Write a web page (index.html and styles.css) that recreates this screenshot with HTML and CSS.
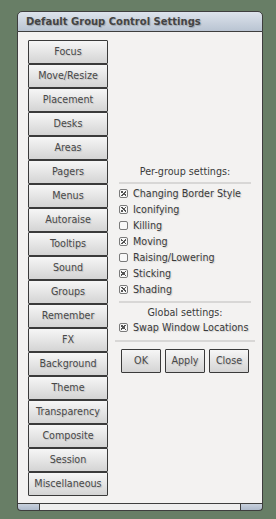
FILE: index.html
```html
<!DOCTYPE html>
<html lang="en">
<head>
    <meta charset="UTF-8">
    <title>Default Group Control Settings</title>
    <link rel="stylesheet" href="styles.css">
</head>
<body>
    <div class="window">
        <div class="titlebar">Default Group Control Settings</div>

        <div class="content">
            <div class="tabs">
                <button class="tab">Focus</button>
                <button class="tab">Move/Resize</button>
                <button class="tab">Placement</button>
                <button class="tab">Desks</button>
                <button class="tab">Areas</button>
                <button class="tab">Pagers</button>
                <button class="tab">Menus</button>
                <button class="tab">Autoraise</button>
                <button class="tab">Tooltips</button>
                <button class="tab">Sound</button>
                <button class="tab">Groups</button>
                <button class="tab">Remember</button>
                <button class="tab">FX</button>
                <button class="tab">Background</button>
                <button class="tab">Theme</button>
                <button class="tab">Transparency</button>
                <button class="tab">Composite</button>
                <button class="tab">Session</button>
                <button class="tab">Miscellaneous</button>
            </div>

            <div class="panel">
                <div class="group">
                    <div class="group-title">Per-group settings:</div>
                    <div class="sep"></div>
                    <label class="check on"><span class="box"></span>Changing Border Style</label>
                    <label class="check on"><span class="box"></span>Iconifying</label>
                    <label class="check"><span class="box"></span>Killing</label>
                    <label class="check on"><span class="box"></span>Moving</label>
                    <label class="check"><span class="box"></span>Raising/Lowering</label>
                    <label class="check on"><span class="box"></span>Sticking</label>
                    <label class="check on"><span class="box"></span>Shading</label>
                    <div class="sep"></div>
                    <div class="group-title">Global settings:</div>
                    <label class="check on"><span class="box"></span>Swap Window Locations</label>
                </div>
                <div class="sep wide"></div>
                <div class="actions">
                    <button class="btn">OK</button>
                    <button class="btn">Apply</button>
                    <button class="btn">Close</button>
                </div>
            </div>
        </div>

        <div class="handles">
            <div class="handle corner"></div>
            <div class="handle middle"></div>
            <div class="handle corner"></div>
        </div>
    </div>
</body>
</html>
```

FILE: styles.css
```css
* {
    margin: 0;
    padding: 0;
    box-sizing: border-box;
}

body {
    background: #687e66;
    font-family: "DejaVu Sans", sans-serif;
    font-size: 9.6px;
    color: #3a3a3a;
    width: 276px;
    height: 519px;
    overflow: hidden;
}

.window {
    margin: 11px 0 0 17px;
    width: 246px;
}

.titlebar {
    height: 21px;
    border: 1px solid #3e3e3e;
    border-radius: 5px 5px 0 0;
    background: linear-gradient(#dde3ec, #b9c4d2);
    font-weight: bold;
    font-size: 10px;
    color: #444;
    text-shadow: 1px 1px 1px rgba(0, 0, 0, 0.2);
    padding: 3px 0 0 8px;
    line-height: 14px;
}

.content {
    display: flex;
    align-items: center;
    background: #f3f2f1;
    border: 1px solid #3e3e3e;
    border-top: none;
    padding: 8px 9px 7px 10px;
}

.tabs {
    display: flex;
    flex-direction: column;
    width: 80px;
}

.tab,
.btn {
    font-family: "DejaVu Sans", sans-serif;
    font-size: 9.6px;
    color: #484848;
    text-shadow: 1px 1px 1px rgba(0, 0, 0, 0.15);
    border: 1px solid #3a3a3a;
    border-radius: 1px;
    background: linear-gradient(#f6f6f6, #d4d4d4);
    padding: 0 0 1px;
}

.tab {
    height: 24px;
}

.panel {
    margin-left: 9px;
    flex: 1;
}

.group {
    padding: 0 2px;
}

.group-title {
    text-align: center;
    height: 15px;
    line-height: 15px;
}

.sep {
    height: 2px;
    background: #d8d7d6;
    margin: 3px 0 2px;
}

.sep.wide {
    margin: 4px -2px 7px;
}

.check {
    display: flex;
    align-items: center;
    height: 16px;
    white-space: nowrap;
    text-shadow: 1px 1px 1px rgba(0, 0, 0, 0.15);
}

.box {
    flex: none;
    width: 9px;
    height: 9px;
    border: 1px solid #7a7a7a;
    border-radius: 2px;
    background: #f8f8f8;
    margin-right: 5px;
    position: relative;
}

.check.on .box::after {
    content: "";
    position: absolute;
    left: 1px;
    top: 1px;
    width: 5px;
    height: 5px;
    background:
        linear-gradient(45deg, transparent 40%, #555 40%, #555 60%, transparent 60%),
        linear-gradient(-45deg, transparent 40%, #555 40%, #555 60%, transparent 60%);
}

.actions {
    display: flex;
    justify-content: space-between;
    padding: 0 4px 0 4px;
}

.btn {
    width: 40px;
    height: 24px;
}

.handles {
    display: flex;
    height: 7px;
}

.handle {
    border: 1px solid #3e3e3e;
    border-top: none;
}

.handle.corner {
    width: 23px;
    background: linear-gradient(#c7d0dc, #aebacb);
}

.handle.corner:first-child {
    border-radius: 0 0 0 4px;
}

.handle.corner:last-child {
    border-radius: 0 0 4px 0;
}

.handle.middle {
    flex: 1;
    background: #eeeeee;
    border-left: none;
    border-right: none;
}
```
